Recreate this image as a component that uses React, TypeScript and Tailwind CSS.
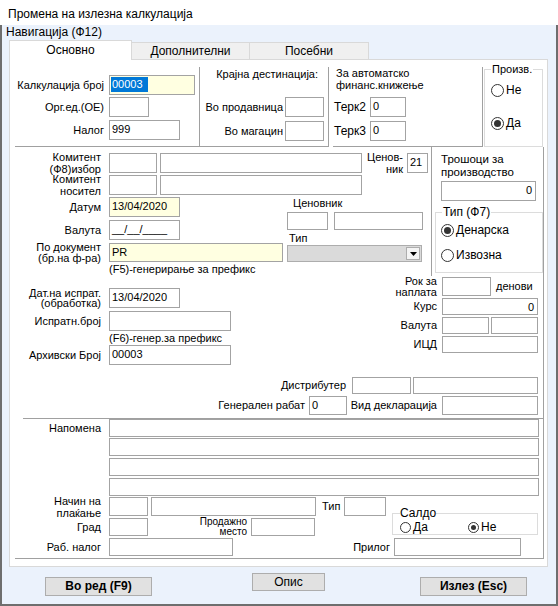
import React from "react";

type BoxProps = { cls: string; y?: boolean; right?: boolean; children?: React.ReactNode };
function Box({ cls, y, right, children }: BoxProps) {
  return (
    <div
      className={`${cls} shrink-0 border border-[#a3a3a3] ${y ? "bg-[#ffffe1]" : "bg-white"} text-[11px] leading-[13px] pt-[2px] ${right ? "text-right pr-[3px]" : "pl-[2px]"} overflow-hidden whitespace-nowrap`}
    >
      {children}
    </div>
  );
}

function Radio({ checked, label, small }: { checked?: boolean; label: string; small?: boolean }) {
  return (
    <div className="flex items-center gap-[2px] shrink-0">
      <div
        className={`${small ? "w-[11px] h-[11px]" : "w-[13px] h-[13px]"} rounded-full border border-[#333333] bg-white flex items-center justify-center`}
      >
        {checked ? <div className={`${small ? "w-[5px] h-[5px]" : "w-[7px] h-[7px]"} rounded-full bg-[#333333]`} /> : null}
      </div>
      <span className="text-[12px] leading-[13px]">{label}</span>
    </div>
  );
}

export default function App() {
  return (
    <div className="w-[558px] h-[606px] bg-white font-['Liberation_Sans',Arial,sans-serif] text-[11px] text-black leading-none whitespace-nowrap overflow-hidden flex flex-col">
      <div className="h-[25px] shrink-0 pl-[8px] pt-[7px] text-[12px] leading-[14px]">Промена на излезна калкулација</div>
      <div className="flex-1 bg-[#ebf2fc] border-x-2 border-b-2 border-[#6e6e6e] flex flex-col">
        <div className="h-[15px] shrink-0 pl-[4px] text-[12px] leading-[14px]">Навигација (Ф12)</div>
        {/* tabs */}
        <div className="h-[19px] shrink-0 ml-[7px] flex items-end">
          <div className="relative z-10 w-[123px] h-[20px] -mb-px bg-white border border-b-0 border-[#d9d9d9] text-[12px] leading-[14px] pt-[2px] text-center">
            Основно
          </div>
          <div className="w-[118px] h-[17px] bg-[#f0f0f0] border-t border-r border-[#d9d9d9] text-[12px] leading-[16px] text-center">
            Дополнителни
          </div>
          <div className="w-[119px] h-[17px] bg-[#f0f0f0] border-t border-r border-[#d9d9d9] text-[12px] leading-[16px] text-center">
            Посебни
          </div>
        </div>
        {/* panel */}
        <div className="ml-[7px] w-[539px] h-[508px] shrink-0 bg-white border border-[#d9d9d9] flex flex-col">
          {/* Section A */}
          <div className="h-[87px] shrink-0 flex items-start">
            <div className="ml-[5px] mt-[7px] w-[185px] h-[80px] border-r border-b border-[#a0a0a0] flex flex-col">
              <div className="mt-[8px] h-[20px] flex items-center">
                <div className="w-[89px] text-right">Калкулација број</div>
                <div className="ml-[5px] w-[86px] h-[20px] shrink-0 border border-[#a3a3a3] bg-[#ffffe1] pl-[1px] pt-[1px]">
                  <span className="inline-block bg-[#0078d7] text-white text-[11px] leading-[15px] pl-[1px] pr-[5px]">00003</span>
                </div>
              </div>
              <div className="mt-[2px] h-[20px] flex items-center">
                <div className="w-[89px] text-right">Орг.ед.(ОЕ)</div>
                <div className="ml-[5px]">
                  <Box cls="w-[40px] h-[20px]" />
                </div>
              </div>
              <div className="mt-[3px] h-[20px] flex items-center">
                <div className="w-[89px] text-right">Налог</div>
                <div className="ml-[5px]">
                  <Box cls="w-[71px] h-[20px]">999</Box>
                </div>
              </div>
            </div>
            <div className="mt-[7px] w-[129px] h-[80px] border-r border-b border-[#a0a0a0] flex flex-col">
              <div className="mt-[1px] pr-[10px] text-right leading-[12px]">Крајна дестинација:</div>
              <div className="mt-[17px] h-[20px] flex items-center">
                <div className="w-[83px] text-right">Во продавница</div>
                <div className="ml-[2px]">
                  <Box cls="w-[39px] h-[20px]" />
                </div>
              </div>
              <div className="mt-[4px] h-[20px] flex items-center">
                <div className="w-[83px] text-right">Во магацин</div>
                <div className="ml-[2px]">
                  <Box cls="w-[39px] h-[20px]" />
                </div>
              </div>
            </div>
            <div className="ml-[4px] mt-[7px] w-[150px] h-[80px] border-r border-b border-[#a0a0a0] flex flex-col">
              <div className="pl-[3px] leading-[12px]">
                <div>За автоматско</div>
                <div>финанс.книжење</div>
              </div>
              <div className="mt-[6px] h-[20px] flex items-center">
                <div className="w-[37px] pl-[1px] text-[12px]">Терк2</div>
                <Box cls="w-[36px] h-[20px]">0</Box>
              </div>
              <div className="mt-[4px] h-[20px] flex items-center">
                <div className="w-[37px] pl-[1px] text-[12px]">Терк3</div>
                <Box cls="w-[36px] h-[20px]">0</Box>
              </div>
            </div>
            <fieldset className="ml-[1px] mt-[3px] w-[59px] h-[84px] border border-[#dcdcdc] pl-[6px]">
              <legend className="ml-0 px-[1px] text-[11px] leading-[12px]">Произв.</legend>
              <div className="mt-[9px]">
                <Radio label="Не" />
              </div>
              <div className="mt-[20px]">
                <Radio label="Да" checked />
              </div>
            </fieldset>
          </div>

          {/* Section B */}
          <div className="h-[129px] shrink-0 flex items-stretch">
            <div className="w-[421px] flex flex-col">
              <div className="mt-[6px] h-[20px] flex items-center">
                <div className="w-[91px] text-right leading-[12px]">
                  <div>Комитент</div>
                  <div>(Ф8)избор</div>
                </div>
                <div className="ml-[8px]">
                  <Box cls="w-[48px] h-[20px]" />
                </div>
                <div className="ml-[3px]">
                  <Box cls="w-[202px] h-[20px]" />
                </div>
                <div className="w-[41px] text-right leading-[12px]">
                  <div>Ценов-</div>
                  <div>ник</div>
                </div>
                <div className="ml-[4px]">
                  <Box cls="w-[21px] h-[20px]">21</Box>
                </div>
              </div>
              <div className="mt-[2px] h-[20px] flex items-center">
                <div className="w-[91px] text-right leading-[12px]">
                  <div>Комитент</div>
                  <div>носител</div>
                </div>
                <div className="ml-[8px]">
                  <Box cls="w-[48px] h-[20px]" />
                </div>
                <div className="ml-[3px]">
                  <Box cls="w-[202px] h-[20px]" />
                </div>
              </div>
              <div className="flex">
                <div className="w-[274px] flex flex-col">
                  <div className="mt-[2px] h-[20px] flex items-center">
                    <div className="w-[91px] text-right">Датум</div>
                    <div className="ml-[8px]">
                      <Box cls="w-[71px] h-[20px]" y>
                        13/04/2020
                      </Box>
                    </div>
                  </div>
                  <div className="mt-[3px] h-[20px] flex items-center">
                    <div className="w-[91px] text-right">Валута</div>
                    <div className="ml-[8px]">
                      <Box cls="w-[71px] h-[20px]">__/__/____</Box>
                    </div>
                  </div>
                  <div className="mt-[3px] h-[19px] flex items-center">
                    <div className="w-[91px] text-right leading-[11px]">
                      <div>По документ</div>
                      <div>(бр.на ф-ра)</div>
                    </div>
                    <div className="ml-[8px]">
                      <Box cls="w-[174px] h-[19px]" y>
                        PR
                      </Box>
                    </div>
                  </div>
                </div>
                <div className="ml-[3px] w-[136px] flex flex-col">
                  <div className="mt-[2px] pl-[6px] leading-[12px]">Ценовник</div>
                  <div className="mt-[3px] flex">
                    <Box cls="w-[41px] h-[18px]" />
                    <div className="ml-[6px]">
                      <Box cls="w-[89px] h-[18px]" />
                    </div>
                  </div>
                  <div className="mt-[2px] pl-[2px] leading-[12px]">Тип</div>
                  <div className="mt-[1px] w-[135px] h-[17px] bg-[#dadada] border border-[#adadad] flex items-center justify-end pr-[1px]">
                    <div className="w-[14px] h-[13px] bg-[#f4f4f4] border border-[#adadad] flex items-center justify-center">
                      <svg width="7" height="4" viewBox="0 0 7 4">
                        <path d="M0 0H7L3.5 4Z" fill="#000" />
                      </svg>
                    </div>
                  </div>
                </div>
              </div>
              <div className="mt-[1px] pl-[99px] leading-[12px]">(F5)-генерирање за префикс</div>
            </div>
            <div className="w-[113px] border-l border-r border-[#a0a0a0] flex flex-col">
              <div className="mt-[6px] pl-[9px] text-[11.5px] leading-[13px]">
                <div>Трошоци за</div>
                <div>производство</div>
              </div>
              <div className="mt-[2px] ml-[9px]">
                <Box cls="w-[95px] h-[20px]" right>
                  0
                </Box>
              </div>
              <fieldset className="mt-[5px] ml-[3px] w-[108px] h-[67px] border border-[#dcdcdc] pl-[5px]">
                <legend className="ml-[1px] px-[1px] text-[12px] leading-[12px]">Тип (Ф7)</legend>
                <div className="mt-[6px]">
                  <Radio label="Денарска" checked />
                </div>
                <div className="mt-[12px]">
                  <Radio label="Извозна" />
                </div>
              </fieldset>
            </div>
          </div>

          {/* Section C */}
          <div className="ml-[13px] w-[521px] h-[143px] shrink-0 border-r border-b border-[#a0a0a0] flex flex-col">
            <div className="flex">
              <div className="flex flex-col">
                <div className="mt-[12px] h-[20px] flex items-center">
                  <div className="w-[78px] text-right leading-[10px]">
                    <div>Дат.на испрат.</div>
                    <div>(обработка)</div>
                  </div>
                  <div className="ml-[8px]">
                    <Box cls="w-[71px] h-[20px]">13/04/2020</Box>
                  </div>
                </div>
                <div className="mt-[3px] h-[20px] flex items-center">
                  <div className="w-[78px] text-right">Испратн.број</div>
                  <div className="ml-[8px]">
                    <Box cls="w-[122px] h-[20px]" />
                  </div>
                </div>
                <div className="mt-[1px] pl-[86px] leading-[12px]">(F6)-генер.за префикс</div>
                <div className="mt-[1px] h-[20px] flex items-center">
                  <div className="w-[78px] text-right">Архивски Број</div>
                  <div className="ml-[8px]">
                    <Box cls="w-[122px] h-[20px]">00003</Box>
                  </div>
                </div>
              </div>
              <div className="ml-auto pr-[5px] flex flex-col">
                <div className="mt-[1px] h-[19px] flex items-center">
                  <div className="w-[60px] text-right leading-[11px]">
                    <div>Рок за</div>
                    <div>наплата</div>
                  </div>
                  <div className="ml-[5px]">
                    <Box cls="w-[49px] h-[19px]" />
                  </div>
                  <div className="ml-[5px] w-[42px]">денови</div>
                </div>
                <div className="mt-[2px] h-[17px] flex items-center">
                  <div className="w-[60px] text-right">Курс</div>
                  <div className="ml-[5px]">
                    <Box cls="w-[96px] h-[17px]" right>
                      0
                    </Box>
                  </div>
                </div>
                <div className="mt-[2px] h-[17px] flex items-center">
                  <div className="w-[60px] text-right">Валута</div>
                  <div className="ml-[5px]">
                    <Box cls="w-[47px] h-[17px]" />
                  </div>
                  <div className="ml-[2px]">
                    <Box cls="w-[47px] h-[17px]" />
                  </div>
                </div>
                <div className="mt-[2px] h-[17px] flex items-center">
                  <div className="w-[60px] text-right">ИЦД</div>
                  <div className="ml-[5px]">
                    <Box cls="w-[96px] h-[17px]" />
                  </div>
                </div>
              </div>
            </div>
            <div className="mt-[12px] h-[17px] flex items-center">
              <div className="w-[323px] text-right">Дистрибутер</div>
              <div className="ml-[6px]">
                <Box cls="w-[59px] h-[17px]" />
              </div>
              <div className="ml-[2px]">
                <Box cls="w-[125px] h-[17px]" />
              </div>
            </div>
            <div className="mt-[2px] h-[19px] flex items-center">
              <div className="w-[282px] text-right">Генерален рабат</div>
              <div className="ml-[4px]">
                <Box cls="w-[38px] h-[19px]">0</Box>
              </div>
              <div className="ml-[2px] w-[88px] text-right">Вид декларација</div>
              <div className="ml-[5px]">
                <Box cls="w-[96px] h-[19px]" />
              </div>
            </div>
          </div>

          {/* Section D */}
          <div className="ml-[5px] w-[529px] h-[140px] shrink-0 border-r border-b border-[#a0a0a0] flex flex-col">
            <div className="flex items-start">
              <div className="w-[86px] h-[18px] flex items-center justify-end">Напомена</div>
              <div className="ml-[8px] flex flex-col">
                <Box cls="w-[430px] h-[18px]" />
                <div className="mt-[1px]">
                  <Box cls="w-[430px] h-[18px]" />
                </div>
                <div className="mt-[2px]">
                  <Box cls="w-[430px] h-[18px]" />
                </div>
                <div className="mt-[2px]">
                  <Box cls="w-[430px] h-[18px]" />
                </div>
              </div>
            </div>
            <div className="flex items-start">
              <div className="flex flex-col">
                <div className="mt-[1px] h-[19px] flex items-center">
                  <div className="w-[86px] text-right leading-[12px]">
                    <div>Начин на</div>
                    <div>плаќање</div>
                  </div>
                  <div className="ml-[8px]">
                    <Box cls="w-[39px] h-[19px]" />
                  </div>
                  <div className="ml-[3px]">
                    <Box cls="w-[165px] h-[19px]" />
                  </div>
                  <div className="ml-[6px] w-[22px] self-start pt-[4px]">Тип</div>
                  <Box cls="w-[42px] h-[19px]" />
                </div>
                <div className="mt-[2px] h-[18px] flex items-center">
                  <div className="w-[86px] text-right">Град</div>
                  <div className="ml-[8px]">
                    <Box cls="w-[39px] h-[18px]" />
                  </div>
                  <div className="w-[99px] text-right text-[10px] leading-[10px]">
                    <div>Продажно</div>
                    <div>место</div>
                  </div>
                  <div className="ml-[4px]">
                    <Box cls="w-[64px] h-[18px]" />
                  </div>
                </div>
              </div>
              <fieldset className="ml-[6px] mt-[11px] w-[146px] h-[28px] border border-[#dcdcdc] pl-[7px]">
                <legend className="ml-0 px-0 text-[12px] leading-[12px]">Салдо</legend>
                <div className="mt-[2px] flex items-center">
                  <div className="w-[68px]">
                    <Radio label="Да" small />
                  </div>
                  <Radio label="Не" small checked />
                </div>
              </fieldset>
            </div>
            <div className="mt-[2px] h-[18px] flex items-center">
              <div className="w-[86px] text-right">Раб. налог</div>
              <div className="ml-[8px]">
                <Box cls="w-[124px] h-[18px]" />
              </div>
              <div className="w-[157px] text-right">Прилог</div>
              <div className="ml-[4px]">
                <Box cls="w-[127px] h-[18px]" />
              </div>
            </div>
          </div>
        </div>
        {/* Buttons */}
        <div className="flex items-start">
          <div className="ml-[43px] mt-[10px] w-[107px] h-[19px] bg-[#e1e1e1] border border-[#adadad] text-[12px] leading-[17px] font-bold text-center">
            Во ред (F9)
          </div>
          <div className="ml-[100px] mt-[6px] w-[73px] h-[18px] bg-[#e1e1e1] border border-[#adadad] text-[12px] leading-[16px] text-center">
            Опис
          </div>
          <div className="ml-[95px] mt-[10px] w-[107px] h-[19px] bg-[#e1e1e1] border border-[#adadad] text-[12px] leading-[17px] font-bold text-center">
            Излез (Esc)
          </div>
        </div>
      </div>
    </div>
  );
}
